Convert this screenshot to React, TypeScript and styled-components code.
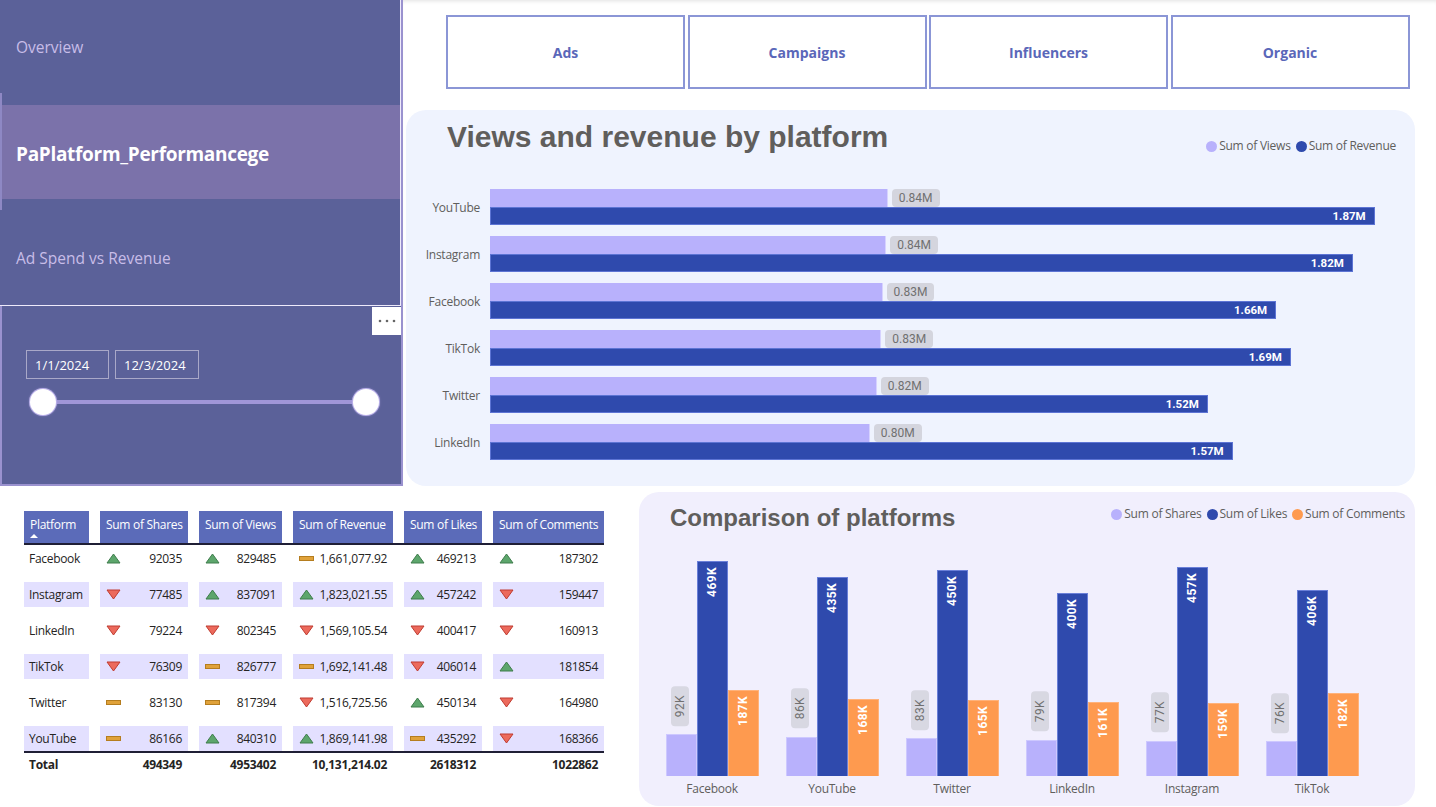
import React from 'react';
import styled, { createGlobalStyle } from 'styled-components';

const UI = `"Segoe UI", "Open Sans", "Noto Sans", sans-serif`;
const DIN = `Roboto, "Liberation Sans", sans-serif`;
const TITLE = `"Liberation Sans", Arial, sans-serif`;

const C = {
  nav: '#5b6199',
  navActive: '#7b72aa',
  navText: '#c8bde8',
  lavLine: '#9a92cf',
  light: '#b8b1fc',
  dark: '#2f4aad',
  orange: '#fe9a4f',
  grey: '#605e5c',
  header: '#5b6bb9',
  band: '#e3e0ff',
  ink: '#252423',
};

const Global = createGlobalStyle`
  html, body { margin: 0; padding: 0; background: #ffffff; }
  body { font-family: ${UI}; color: ${C.ink}; }
  * { box-sizing: border-box; }
`;

const Page = styled.div`
  width: 1436px;
  height: 807px;
  overflow: hidden;
  display: flex;
  flex-direction: column;
  background: #fff;
`;

const TopSection = styled.div`
  display: flex;
  height: 486px;
`;

const LeftColumn = styled.div`
  width: 403px;
  display: flex;
  flex-direction: column;
  border-right: 2px solid ${C.lavLine};
`;

const Nav = styled.nav`
  height: 306px;
  background: ${C.nav};
  border-right: 1px solid #eeeafb;
  border-bottom: 1px solid #eeeafb;
  display: flex;
  flex-direction: column;
`;

const NavItem = styled.div<{ $h: number; $pt?: number; $pb?: number; $active?: boolean }>`
  position: relative;
  height: ${(p) => p.$h}px;
  padding: ${(p) => p.$pt || 0}px 0 ${(p) => p.$pb || 0}px 16px;
  display: flex;
  align-items: center;
  background: ${(p) => (p.$active ? C.navActive : 'transparent')};
  color: ${(p) => (p.$active ? '#ffffff' : C.navText)};
  font-size: ${(p) => (p.$active ? 19 : 15.5)}px;
  font-weight: ${(p) => (p.$active ? 700 : 400)};
  letter-spacing: ${(p) => (p.$active ? -0.3 : 0)}px;
  ${(p) =>
    p.$active &&
    `&::before {
      content: '';
      position: absolute;
      left: 0;
      top: -12px;
      bottom: -11px;
      width: 2px;
      background: #8e88c4;
    }`}
`;

const Slicer = styled.div`
  position: relative;
  flex: 1;
  background: ${C.nav};
  border-left: 2px solid ${C.lavLine};
  border-bottom: 2px solid ${C.lavLine};
  padding: 44px 0 0 24px;
`;

const MoreButton = styled.div`
  position: absolute;
  top: 1px;
  right: 0;
  width: 29px;
  height: 28px;
  background: #ffffff;
  display: flex;
  align-items: center;
  justify-content: center;
`;

const DateRow = styled.div`
  display: flex;
  gap: 6px;
`;

const DateBox = styled.div<{ $w: number }>`
  width: ${(p) => p.$w}px;
  height: 29px;
  border: 1px solid #a9a8c8;
  color: #ffffff;
  font-size: 13px;
  padding-left: 8px;
  display: flex;
  align-items: center;
`;

const Slider = styled.div`
  position: relative;
  width: 349px;
  height: 26px;
  margin: 10px 0 0 4px;
  display: flex;
  justify-content: space-between;
  &::before {
    content: '';
    position: absolute;
    left: 13px;
    right: 13px;
    top: 11px;
    height: 4px;
    background: #a096d8;
  }
`;

const Thumb = styled.div`
  position: relative;
  width: 26px;
  height: 26px;
  border-radius: 50%;
  background: #ffffff;
  box-shadow: 0 0 0 1px #b9afe8, 0 0 3px rgba(180, 170, 230, 0.9);
`;

const RightColumn = styled.div`
  flex: 1;
  display: flex;
  flex-direction: column;
  padding-top: 15px;
  box-shadow: inset 0 4px 4px -3px rgba(0, 0, 0, 0.12);
`;

const Tabs = styled.div`
  display: flex;
  gap: 2.5px;
  padding-left: 43px;
`;

const Tab = styled.div`
  width: 239px;
  height: 74px;
  border: 2px solid #8b96d6;
  display: flex;
  align-items: center;
  justify-content: center;
  color: #5a67b9;
  font-size: 14px;
  font-weight: 700;
`;

const BarCard = styled.section`
  margin: 21px 0 0 3px;
  width: 1009px;
  height: 376px;
  background: #eff3fe;
  border-radius: 20px;
  padding: 8px 19px 26px 0;
  display: flex;
  flex-direction: column;
`;

const CardHeader = styled.div<{ $pl: number; $legendTop: number }>`
  display: flex;
  justify-content: space-between;
  align-items: flex-start;
  padding-left: ${(p) => p.$pl}px;
  & > :last-child {
    margin-top: ${(p) => p.$legendTop}px;
  }
`;

const Title = styled.h2<{ $size: number; $lh: number }>`
  margin: 0;
  font-family: ${TITLE};
  font-weight: 700;
  font-size: ${(p) => p.$size}px;
  line-height: ${(p) => p.$lh}px;
  color: ${C.grey};
`;

const Legend = styled.div`
  display: flex;
  gap: 5px;
  font-size: 12px;
  line-height: 16px;
  letter-spacing: -0.25px;
  color: ${C.grey};
`;

const LegendItem = styled.div`
  display: flex;
  align-items: center;
  gap: 2px;
`;

const Dot = styled.span<{ $c: string }>`
  width: 11px;
  height: 11px;
  border-radius: 50%;
  background: ${(p) => p.$c};
`;

const HPlot = styled.div`
  margin-top: 33px;
  display: flex;
  flex-direction: column;
  gap: 11px;
`;

const HRow = styled.div`
  display: grid;
  grid-template-columns: 74px 1fr;
  column-gap: 10px;
  align-items: center;
`;

const CatLabel = styled.div`
  text-align: right;
  font-size: 12px;
  letter-spacing: -0.25px;
  color: ${C.grey};
`;

const BarStack = styled.div`
  display: flex;
  flex-direction: column;
`;

const ViewsLine = styled.div`
  display: flex;
  align-items: center;
  gap: 4px;
  height: 18px;
`;

const ViewsBar = styled.div`
  height: 18px;
  background: ${C.light};
  border-right: 1px solid #d6d2ff;
`;

const Chip = styled.div`
  height: 18px;
  padding: 0 7px;
  border-radius: 4px;
  background: #d4d5de;
  color: #707070;
  font-family: ${DIN};
  font-size: 12px;
  display: flex;
  align-items: center;
`;

const RevenueBar = styled.div`
  height: 18px;
  background: ${C.dark};
  border: 1px solid #5d74d4;
  display: flex;
  align-items: center;
  justify-content: flex-end;
  padding-right: 8px;
  color: #ffffff;
  font-family: ${DIN};
  font-weight: 700;
  font-size: 11.5px;
`;

const BottomSection = styled.div`
  display: flex;
  align-items: flex-start;
  padding-top: 6px;
`;

const TableWrap = styled.div`
  margin: 19px 0 0 24px;
  width: 580px;
  font-size: 12px;
  letter-spacing: -0.3px;
`;

const GRID = '65px 88px 83px 100px 78px 111px';

const HeadRow = styled.div`
  display: grid;
  grid-template-columns: ${GRID};
  column-gap: 11px;
  border-bottom: 2px solid #1f1f35;
`;

const HeadCell = styled.div`
  height: 32px;
  background: ${C.header};
  color: #ffffff;
  padding: 6px 6px 0;
  line-height: 16px;
  white-space: nowrap;
`;

const SortArrow = styled.div`
  width: 0;
  height: 0;
  margin: 1px 0 0 0;
  border-left: 4px solid transparent;
  border-right: 4px solid transparent;
  border-bottom: 4px solid #ffffff;
`;

const BodyRows = styled.div`
  display: flex;
  flex-direction: column;
  gap: 11px;
  padding-top: 1px;
`;

const BodyRow = styled.div`
  display: grid;
  grid-template-columns: ${GRID};
  column-gap: 11px;
`;

const Cell = styled.div<{ $band: boolean }>`
  height: 25px;
  background: ${(p) => (p.$band ? C.band : 'transparent')};
  display: flex;
  align-items: center;
  justify-content: space-between;
  padding: 0 6px;
  color: ${C.ink};
  white-space: nowrap;
`;

const NameCell = styled(Cell)`
  padding-left: 5px;
`;

const TotalRow = styled.div`
  display: grid;
  grid-template-columns: ${GRID};
  column-gap: 11px;
  border-top: 2px solid #1f1f35;
  height: 24px;
  align-items: center;
  font-weight: 700;
`;

const TotalCell = styled.div<{ $right?: boolean }>`
  text-align: ${(p) => (p.$right ? 'right' : 'left')};
  padding: 0 ${(p) => (p.$right ? 6 : 0)}px 0 ${(p) => (p.$right ? 0 : 5)}px;
  white-space: nowrap;
`;

const ColCard = styled.section`
  margin-left: 35px;
  width: 776px;
  height: 314px;
  background: #f1effd;
  border-radius: 20px;
  padding: 11px 10px 9px 13px;
  display: flex;
  flex-direction: column;
`;

const VPlot = styled.div`
  display: flex;
  height: 243px;
`;

const Slot = styled.div`
  width: 120px;
  display: flex;
  align-items: flex-end;
  justify-content: center;
`;

const VBar = styled.div<{ $c: string; $edge: string }>`
  position: relative;
  width: 31px;
  background: ${(p) => p.$c};
  border: 1px solid ${(p) => p.$edge};
  border-bottom: none;
`;

const InsideLabel = styled.div`
  position: absolute;
  top: 5px;
  left: 0;
  right: 0;
  display: flex;
  justify-content: center;
`;

const AboveLabel = styled.div`
  position: absolute;
  bottom: calc(100% + 9px);
  left: -2px;
  right: 0;
  display: flex;
  justify-content: center;
`;

const VText = styled.span`
  writing-mode: vertical-rl;
  transform: rotate(180deg);
  font-family: ${DIN};
  font-size: 12px;
  font-weight: 700;
  color: #ffffff;
  letter-spacing: 0.4px;
`;

const VChip = styled.span`
  writing-mode: vertical-rl;
  transform: rotate(180deg);
  font-family: ${DIN};
  font-size: 12px;
  color: #707070;
  background: #d8d8e2;
  border-radius: 4px;
  padding: 9px 2px;
  letter-spacing: 0.4px;
`;

const AxisRow = styled.div`
  display: flex;
  padding-top: 5px;
`;

const AxisLabel = styled.div`
  width: 120px;
  text-align: center;
  font-size: 12px;
  line-height: 16px;
  letter-spacing: -0.25px;
  color: ${C.grey};
`;

type Trend = 'up' | 'down' | 'flat';

const TrendIcon = ({ t }: { t: Trend }) => {
  if (t === 'up')
    return (
      <svg width="15" height="11" viewBox="0 0 15 11">
        <polygon points="7.5,1 14,10 1,10" fill="#5da66c" stroke="#3f7d4c" strokeWidth="1" />
      </svg>
    );
  if (t === 'down')
    return (
      <svg width="15" height="11" viewBox="0 0 15 11">
        <polygon points="1,1 14,1 7.5,10" fill="#ec6a5c" stroke="#bf3b30" strokeWidth="1" />
      </svg>
    );
  return (
    <svg width="15" height="11" viewBox="0 0 15 11">
      <rect x="0.5" y="3.5" width="14" height="4" fill="#e0a23a" stroke="#b57d1f" strokeWidth="1" />
    </svg>
  );
};

const hbars = [
  { p: 'YouTube', v: 840310, vl: '0.84M', r: 1869141.98, rl: '1.87M' },
  { p: 'Instagram', v: 837091, vl: '0.84M', r: 1823021.55, rl: '1.82M' },
  { p: 'Facebook', v: 829485, vl: '0.83M', r: 1661077.92, rl: '1.66M' },
  { p: 'TikTok', v: 826777, vl: '0.83M', r: 1692141.48, rl: '1.69M' },
  { p: 'Twitter', v: 817394, vl: '0.82M', r: 1516725.56, rl: '1.52M' },
  { p: 'LinkedIn', v: 802345, vl: '0.80M', r: 1569105.54, rl: '1.57M' },
];
const PX_PER_M = 473.3;

type Cellv = [Trend, string];
const tableRows: { p: string; c: Cellv[] }[] = [
  { p: 'Facebook', c: [['up', '92035'], ['up', '829485'], ['flat', '1,661,077.92'], ['up', '469213'], ['up', '187302']] },
  { p: 'Instagram', c: [['down', '77485'], ['up', '837091'], ['up', '1,823,021.55'], ['up', '457242'], ['down', '159447']] },
  { p: 'LinkedIn', c: [['down', '79224'], ['down', '802345'], ['down', '1,569,105.54'], ['down', '400417'], ['down', '160913']] },
  { p: 'TikTok', c: [['down', '76309'], ['flat', '826777'], ['flat', '1,692,141.48'], ['down', '406014'], ['up', '181854']] },
  { p: 'Twitter', c: [['flat', '83130'], ['flat', '817394'], ['down', '1,516,725.56'], ['up', '450134'], ['down', '164980']] },
  { p: 'YouTube', c: [['flat', '86166'], ['up', '840310'], ['up', '1,869,141.98'], ['flat', '435292'], ['down', '168366']] },
];
const headers = ['Sum of Shares', 'Sum of Views', 'Sum of Revenue', 'Sum of Likes', 'Sum of Comments'];
const totals = ['494349', '4953402', '10,131,214.02', '2618312', '1022862'];

const vbars = [
  { p: 'Facebook', s: 92035, l: 469213, c: 187302 },
  { p: 'YouTube', s: 86166, l: 435292, c: 168366 },
  { p: 'Twitter', s: 83130, l: 450134, c: 164980 },
  { p: 'LinkedIn', s: 79224, l: 400417, c: 160913 },
  { p: 'Instagram', s: 77485, l: 457242, c: 159447 },
  { p: 'TikTok', s: 76309, l: 406014, c: 181854 },
];
const PX_PER_K = 215 / 469.213;
const k = (n: number) => `${Math.round(n / 1000)}K`;

export default function App() {
  return (
    <Page>
      <Global />
      <TopSection>
        <LeftColumn>
          <Nav>
            <NavItem $h={105} $pb={11}>Overview</NavItem>
            <NavItem $h={94} $pt={4} $active>
              PaPlatform_Performancege
            </NavItem>
            <NavItem $h={106} $pt={12}>Ad Spend vs Revenue</NavItem>
          </Nav>
          <Slicer>
            <MoreButton>
              <svg width="18" height="4" viewBox="0 0 18 4">
                <circle cx="2" cy="2" r="1.3" fill="#666" />
                <circle cx="9" cy="2" r="1.3" fill="#666" />
                <circle cx="16" cy="2" r="1.3" fill="#666" />
              </svg>
            </MoreButton>
            <DateRow>
              <DateBox $w={83}>1/1/2024</DateBox>
              <DateBox $w={84}>12/3/2024</DateBox>
            </DateRow>
            <Slider>
              <Thumb />
              <Thumb />
            </Slider>
          </Slicer>
        </LeftColumn>
        <RightColumn>
          <Tabs>
            <Tab>Ads</Tab>
            <Tab>Campaigns</Tab>
            <Tab>Influencers</Tab>
            <Tab>Organic</Tab>
          </Tabs>
          <BarCard>
            <CardHeader $pl={41} $legendTop={20}>
              <Title $size={30} $lh={38}>Views and revenue by platform</Title>
              <Legend>
                <LegendItem>
                  <Dot $c={C.light} />
                  Sum of Views
                </LegendItem>
                <LegendItem>
                  <Dot $c={C.dark} />
                  Sum of Revenue
                </LegendItem>
              </Legend>
            </CardHeader>
            <HPlot>
              {hbars.map((b) => (
                <HRow key={b.p}>
                  <CatLabel>{b.p}</CatLabel>
                  <BarStack>
                    <ViewsLine>
                      <ViewsBar style={{ width: (b.v / 1e6) * PX_PER_M }} />
                      <Chip>{b.vl}</Chip>
                    </ViewsLine>
                    <RevenueBar style={{ width: (b.r / 1e6) * PX_PER_M }}>{b.rl}</RevenueBar>
                  </BarStack>
                </HRow>
              ))}
            </HPlot>
          </BarCard>
        </RightColumn>
      </TopSection>
      <BottomSection>
        <TableWrap>
          <HeadRow>
            <HeadCell>
              Platform
              <SortArrow />
            </HeadCell>
            {headers.map((h) => (
              <HeadCell key={h}>{h}</HeadCell>
            ))}
          </HeadRow>
          <BodyRows>
            {tableRows.map((r, i) => (
              <BodyRow key={r.p}>
                <NameCell $band={i % 2 === 1}>{r.p}</NameCell>
                {r.c.map(([t, v], j) => (
                  <Cell key={j} $band={i % 2 === 1}>
                    <TrendIcon t={t} />
                    <span>{v}</span>
                  </Cell>
                ))}
              </BodyRow>
            ))}
          </BodyRows>
          <TotalRow>
            <TotalCell>Total</TotalCell>
            {totals.map((t) => (
              <TotalCell key={t} $right>
                {t}
              </TotalCell>
            ))}
          </TotalRow>
        </TableWrap>
        <ColCard>
          <CardHeader $pl={18} $legendTop={3}>
            <Title $size={24} $lh={30}>Comparison of platforms</Title>
            <Legend>
              <LegendItem>
                <Dot $c={C.light} />
                Sum of Shares
              </LegendItem>
              <LegendItem>
                <Dot $c={C.dark} />
                Sum of Likes
              </LegendItem>
              <LegendItem>
                <Dot $c={C.orange} />
                Sum of Comments
              </LegendItem>
            </Legend>
          </CardHeader>
          <VPlot>
            {vbars.map((g) => (
              <Slot key={g.p}>
                <VBar $c={C.light} $edge="#cdc8ff" style={{ height: (g.s / 1000) * PX_PER_K }}>
                  <AboveLabel>
                    <VChip>{k(g.s)}</VChip>
                  </AboveLabel>
                </VBar>
                <VBar $c={C.dark} $edge="#6a7fd8" style={{ height: (g.l / 1000) * PX_PER_K }}>
                  <InsideLabel>
                    <VText>{k(g.l)}</VText>
                  </InsideLabel>
                </VBar>
                <VBar $c={C.orange} $edge="#ffb27a" style={{ height: (g.c / 1000) * PX_PER_K }}>
                  <InsideLabel>
                    <VText>{k(g.c)}</VText>
                  </InsideLabel>
                </VBar>
              </Slot>
            ))}
          </VPlot>
          <AxisRow>
            {vbars.map((g) => (
              <AxisLabel key={g.p}>{g.p}</AxisLabel>
            ))}
          </AxisRow>
        </ColCard>
      </BottomSection>
    </Page>
  );
}
